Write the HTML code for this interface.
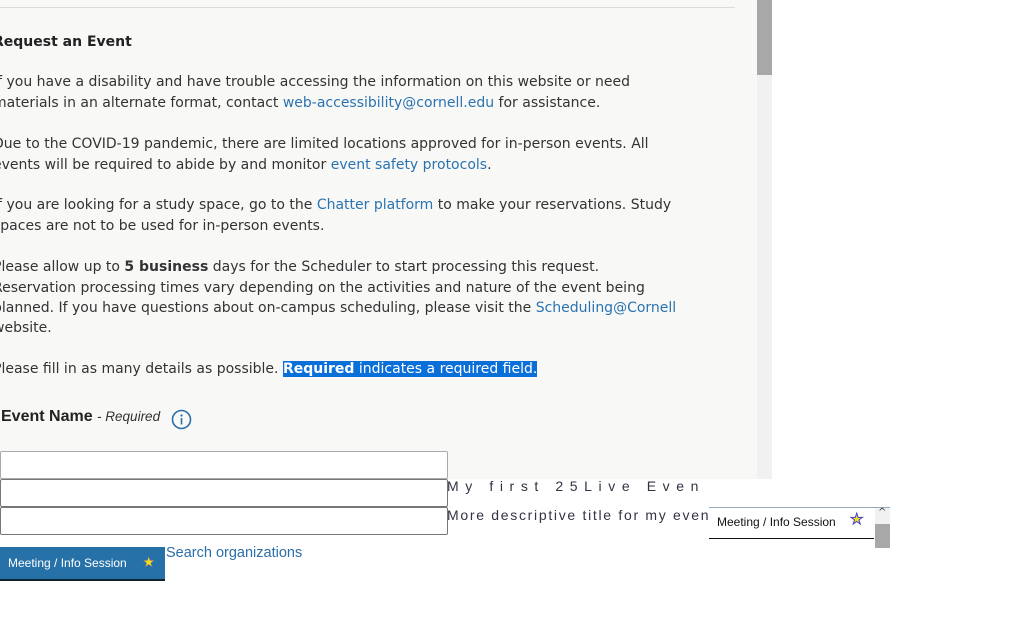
<!DOCTYPE html>
<html><head><meta charset="utf-8"><style>
html,body{margin:0;padding:0;width:1034px;height:637px;overflow:hidden;background:#fff;position:relative}
.panel{position:absolute;left:0;top:0;width:757px;height:479px;background:#f8f8f7}
.sb{position:absolute;left:757px;top:0;width:15px;height:479px;background:#f1f1f1}
.thumb{position:absolute;left:757px;top:0;width:15px;height:75px;background:#a8a8a8}
.hr{position:absolute;left:0;top:7px;width:735px;height:1px;background:#dcdcdc}
.t{position:absolute;left:-7px;white-space:nowrap;font-family:"DejaVu Sans",sans-serif;font-size:14px;color:#333;line-height:20px}
a{color:#2b73b0;text-decoration:none}
b{font-weight:bold}
.sel{background:#0a6fd8;color:#fff}
.lab{position:absolute;left:1px;top:408px;font-family:"Liberation Sans",sans-serif;font-size:16px;color:#222;font-weight:bold}
.lab i{font-weight:normal;font-size:13.5px;color:#333}
.inp{position:absolute;left:0;width:448px;height:28px;background:#fff;border:1px solid #777;border-radius:2px;box-sizing:border-box}
.m{position:absolute;font-family:"Liberation Sans",sans-serif;font-size:14px;color:#334;white-space:nowrap}
.btn{position:absolute;left:0;top:547px;width:165px;height:34px;background:#2672a8;border-bottom:2px solid #123;box-sizing:border-box;color:#fff;font-family:"Liberation Sans",sans-serif;font-size:12px;line-height:32px;padding-left:8px}
.star{position:absolute;font-size:15px;color:#f5e21a}
</style></head><body>
<div class="panel"></div><div class="sb"></div><div class="thumb"></div><div class="hr"></div>
<div class="t" style="top:32px;font-weight:bold;color:#222">Request an Event</div>
<div class="t" style="top:72px">If you have a disability and have trouble accessing the information on this website or need</div>
<div class="t" style="top:93px">materials in an alternate format, contact <a>web-accessibility@cornell.edu</a> for assistance.</div>
<div class="t" style="top:134px">Due to the COVID-19 pandemic, there are limited locations approved for in-person events. All</div>
<div class="t" style="top:155px">events will be required to abide by and monitor <a>event safety protocols</a>.</div>
<div class="t" style="top:195px">If you are looking for a study space, go to the <a>Chatter platform</a> to make your reservations. Study</div>
<div class="t" style="top:216px">spaces are not to be used for in-person events.</div>
<div class="t" style="top:257px">Please allow up to <b>5 business</b> days for the Scheduler to start processing this request.</div>
<div class="t" style="top:278px">Reservation processing times vary depending on the activities and nature of the event being</div>
<div class="t" style="top:298px">planned. If you have questions about on-campus scheduling, please visit the <a>Scheduling@Cornell</a></div>
<div class="t" style="top:318px">website.</div>
<div class="t" style="top:359px">Please fill in as many details as possible. <span class="sel"><b>Required</b> indicates a required field.</span></div>
<div class="lab">Event Name <i>- Required</i></div>
<svg style="position:absolute;left:171px;top:409px" width="21" height="21" viewBox="0 0 21 21"><circle cx="10.5" cy="10.5" r="9" fill="none" stroke="#2b6ea8" stroke-width="1.6"/><circle cx="10.5" cy="6.5" r="1.1" fill="#2b6ea8"/><rect x="9.7" y="9" width="1.6" height="6.5" fill="#2b6ea8"/></svg>
<div class="inp" style="top:451px;border-color:#aaa"></div>
<div class="inp" style="top:479px"></div>
<div class="inp" style="top:507px"></div>
<div class="m" style="left:447px;top:478px;letter-spacing:6.6px">My first 25Live Even</div>
<div class="m" style="left:447px;top:507px;letter-spacing:1.7px">More descriptive title for my even</div>
<div style="position:absolute;left:709px;top:507px;width:181px;height:42px;background:#fff;border-top:1px solid #9ab"></div>
<div style="position:absolute;left:709px;top:538px;width:165px;height:1px;background:#111"></div>
<div style="position:absolute;left:875px;top:508px;width:15px;height:40px;background:#f1f1f1"></div>
<div style="position:absolute;left:875px;top:524px;width:15px;height:24px;background:#a8a8a8"></div>
<div style="position:absolute;left:878px;top:507px;font-size:10px;color:#333;font-family:'DejaVu Sans',sans-serif">^</div>
<div style="position:absolute;left:717px;top:515px;font-family:'Liberation Sans',sans-serif;font-size:12px;color:#111">Meeting / Info Session</div>
<div class="star" style="left:850px;top:510px;color:#f5e21a;-webkit-text-stroke:1px #44c">★</div>
<div class="btn">Meeting / Info Session</div>
<div class="star" style="left:142px;top:553px;-webkit-text-stroke:0.6px #669">★</div>
<div style="position:absolute;left:166px;top:545px;font-family:'Liberation Sans',sans-serif;font-size:14.5px;color:#2b6ea8">Search organizations</div>
</body></html>
